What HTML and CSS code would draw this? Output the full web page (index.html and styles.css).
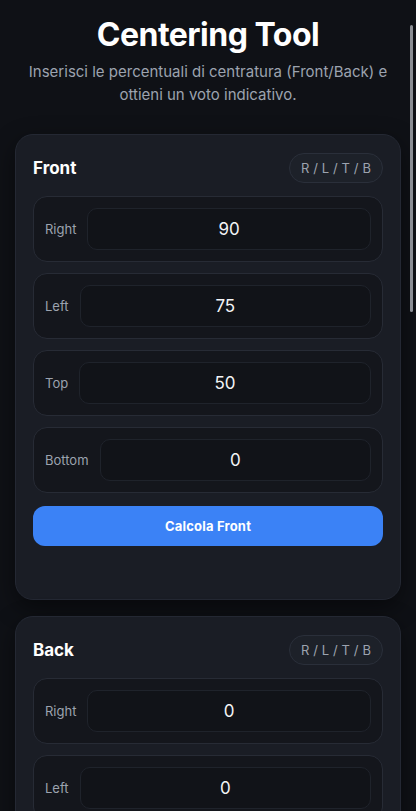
FILE: index.html
```html
<!DOCTYPE html>
<html lang="it">
<head>
<meta charset="utf-8">
<meta name="viewport" content="width=device-width, initial-scale=1">
<title>Centering Tool</title>
<link rel="stylesheet" href="styles.css">
</head>
<body>
<div class="scroll-thumb"></div>
<main class="page">
  <header class="intro">
    <h1 class="title">Centering Tool</h1>
    <p class="subtitle">Inserisci le percentuali di centratura (Front/Back) e ottieni un voto indicativo.</p>
  </header>

  <section class="card">
    <div class="card-head">
      <h2 class="card-title">Front</h2>
      <span class="pill">R / L / T / B</span>
    </div>
    <div class="rows">
      <label class="row"><span class="row-label">Right</span><span class="field">90</span></label>
      <label class="row"><span class="row-label">Left</span><span class="field">75</span></label>
      <label class="row"><span class="row-label">Top</span><span class="field">50</span></label>
      <label class="row"><span class="row-label">Bottom</span><span class="field">0</span></label>
    </div>
    <button class="btn" type="button">Calcola Front</button>
    <div class="result"></div>
  </section>

  <section class="card">
    <div class="card-head">
      <h2 class="card-title">Back</h2>
      <span class="pill">R / L / T / B</span>
    </div>
    <div class="rows">
      <label class="row"><span class="row-label">Right</span><span class="field">0</span></label>
      <label class="row"><span class="row-label">Left</span><span class="field">0</span></label>
      <label class="row"><span class="row-label">Top</span><span class="field">0</span></label>
      <label class="row"><span class="row-label">Bottom</span><span class="field">0</span></label>
    </div>
    <button class="btn" type="button">Calcola Back</button>
    <div class="result"></div>
  </section>
</main>
</body>
</html>
```

FILE: styles.css
```css
html {
  scrollbar-width: none;
  background: #0f1116;
}
html::-webkit-scrollbar {
  display: none;
}
body {
  margin: 0;
  background: #0f1116;
  color: #f3f4f6;
  font-family: Inter, "Noto Sans", "Liberation Sans", sans-serif;
}
.scroll-thumb {
  position: fixed;
  top: 25px;
  right: 3px;
  width: 3px;
  height: 287px;
  border-radius: 2px;
  background: #8b8e94;
  z-index: 10;
}
.page {
  padding: 16px 15px 40px;
  display: flex;
  flex-direction: column;
  gap: 16px;
}
.intro {
  text-align: center;
  margin-bottom: 12px;
}
.title {
  margin: 0;
  font-size: 32px;
  line-height: 38px;
  font-weight: 700;
  color: #ffffff;
  letter-spacing: -0.5px;
}
.subtitle {
  margin: 6px 0 0;
  font-size: 15px;
  line-height: 23px;
  color: #9ca3af;
  padding: 0 10px;
}
.card {
  background: #1a1d25;
  border: 1px solid #242833;
  border-radius: 18px;
  padding: 18px 17px 17px;
  box-shadow: 0 8px 24px rgba(0, 0, 0, 0.45);
  display: flex;
  flex-direction: column;
}
.card-head {
  display: flex;
  align-items: center;
  justify-content: space-between;
  height: 30px;
  margin-bottom: 13px;
}
.card-title {
  margin: 0;
  font-size: 17px;
  font-weight: 700;
  color: #ffffff;
}
.pill {
  height: 28px;
  padding: 0 11px;
  display: flex;
  align-items: center;
  border: 1px solid #2a2f3a;
  background: #1d2129;
  border-radius: 999px;
  font-size: 13px;
  letter-spacing: 0.1px;
  color: #9ca3af;
}
.rows {
  display: flex;
  flex-direction: column;
  gap: 11px;
}
.row {
  display: flex;
  align-items: center;
  gap: 11px;
  height: 66px;
  box-sizing: border-box;
  padding: 11px;
  background: #14161c;
  border: 1px solid #272b35;
  border-radius: 14px;
}
.row-label {
  font-size: 13px;
  color: #9ca3af;
}
.field {
  flex: 1;
  height: 42px;
  box-sizing: border-box;
  display: flex;
  align-items: center;
  justify-content: center;
  background: #111318;
  border: 1px solid #1f232b;
  border-radius: 10px;
  font-size: 17px;
  color: #f3f4f6;
}
.btn {
  margin-top: 13px;
  height: 40px;
  border: 0;
  border-radius: 12px;
  background: #3b82f6;
  color: #ffffff;
  font-family: inherit;
  font-size: 13px;
  font-weight: 700;
  letter-spacing: 0.2px;
}
.result {
  min-height: 36px;
}
```
